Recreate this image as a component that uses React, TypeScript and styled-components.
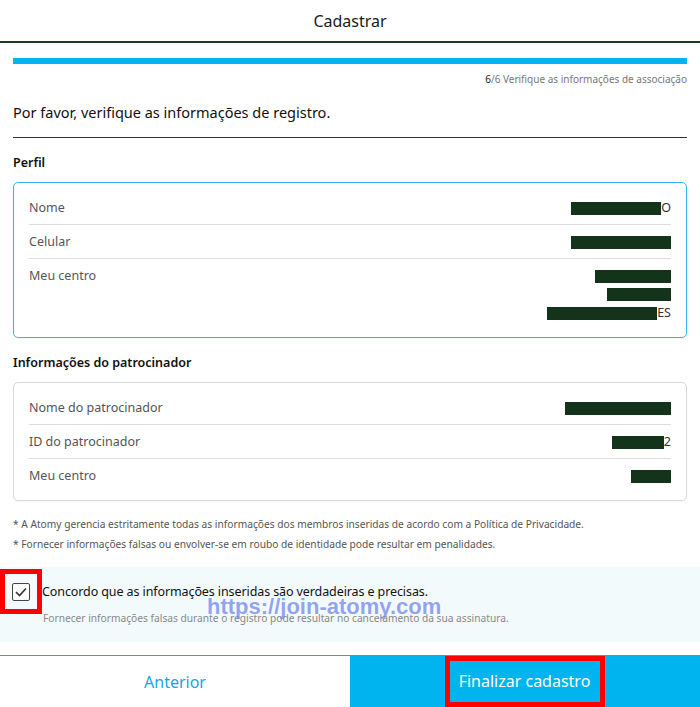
import styled, { createGlobalStyle } from "styled-components";

const GlobalStyle = createGlobalStyle`
  body {
    margin: 0;
    background: #fff;
    font-family: "Noto Sans", "Open Sans", sans-serif;
    color: #222;
  }
`;

type Value = { bar?: number; tail?: string };
type Row = { label: string; values: Value[] };

const profile: Row[] = [
  { label: "Nome", values: [{ bar: 90, tail: "O" }] },
  { label: "Celular", values: [{ bar: 100 }] },
  {
    label: "Meu centro",
    values: [{ bar: 76 }, { bar: 64 }, { bar: 110, tail: "ES" }],
  },
];

const sponsor: Row[] = [
  { label: "Nome do patrocinador", values: [{ bar: 106 }] },
  { label: "ID do patrocinador", values: [{ bar: 52, tail: "2" }] },
  { label: "Meu centro", values: [{ bar: 40 }] },
];

const InfoBox = ({ rows, active }: { rows: Row[]; active?: boolean }) => (
  <Box.Wrapper $active={active}>
    {rows.map((r) => (
      <Box.Row key={r.label}>
        <Box.Label>{r.label}</Box.Label>
        <Box.Values>
          {r.values.map((v, i) => (
            <Box.Value key={i}>
              {v.bar && <Box.Redact style={{ width: v.bar }} />}
              {v.tail}
            </Box.Value>
          ))}
        </Box.Values>
      </Box.Row>
    ))}
  </Box.Wrapper>
);

const App = () => {
  return (
    <Page>
      <GlobalStyle />
      <Header>Cadastrar</Header>
      <Main>
        <Progress />
        <Step>
          <b>6</b>/6 Verifique as informações de associação
        </Step>
        <Title>Por favor, verifique as informações de registro.</Title>
        <SectionTitle>Perfil</SectionTitle>
        <InfoBox rows={profile} active />
        <SectionTitle>Informações do patrocinador</SectionTitle>
        <InfoBox rows={sponsor} />
        <Notes>
          <p>
            * A Atomy gerencia estritamente todas as informações dos membros
            inseridas de acordo com a Política de Privacidade.
          </p>
          <p>
            * Fornecer informações falsas ou envolver-se em roubo de identidade
            pode resultar em penalidades.
          </p>
        </Notes>
      </Main>
      <Agree.Wrapper>
        <Agree.Line>
          <Agree.Mark>
            <Agree.Check>
              <svg width="12" height="10" viewBox="0 0 12 10">
                <path
                  d="M1 5 L4.5 8.5 L11 1.5"
                  fill="none"
                  stroke="#333"
                  strokeWidth="1.6"
                />
              </svg>
            </Agree.Check>
          </Agree.Mark>
          <Agree.Text>
            Concordo que as informações inseridas são verdadeiras e precisas.
          </Agree.Text>
        </Agree.Line>
        <Agree.Sub>
          Fornecer informações falsas durante o registro pode resultar no
          cancelamento da sua assinatura.
        </Agree.Sub>
        <Watermark>https://join-atomy.com</Watermark>
      </Agree.Wrapper>
      <Footer.Wrapper>
        <Footer.Button>Anterior</Footer.Button>
        <Footer.Button $primary>
          <Footer.Marked>Finalizar cadastro</Footer.Marked>
        </Footer.Button>
      </Footer.Wrapper>
    </Page>
  );
};

const Page = styled.div`
  width: 700px;
  height: 707px;
  display: flex;
  flex-direction: column;
  overflow: hidden;
`;

const Header = styled.header`
  height: 41px;
  flex-shrink: 0;
  display: flex;
  align-items: center;
  justify-content: center;
  font-size: 16px;
  color: #1a1a1a;
  border-bottom: 2px solid #203a24;
`;

const Main = styled.main`
  padding: 0 13px;
`;

const Progress = styled.div`
  margin-top: 15px;
  height: 6px;
  background: #00b4ef;
`;

const Step = styled.div`
  margin-top: 8px;
  text-align: right;
  font-size: 10px;
  color: #777;
  b {
    font-weight: 400;
    color: #222;
  }
`;

const Title = styled.h2`
  margin: 16px 0 0;
  padding-bottom: 15px;
  font-size: 14.5px;
  font-weight: 400;
  color: #111;
  border-bottom: 1px solid #333;
`;

const SectionTitle = styled.h3`
  margin: 16px 0 11px;
  font-size: 12.5px;
  font-weight: 600;
  color: #111;
`;

const Box = {
  Wrapper: styled.div<{ $active?: boolean }>`
    border: 1px solid ${(p) => (p.$active ? "#35b6ea" : "#d9d9d9")};
    border-radius: 5px;
    padding: 8px 15px;
    box-shadow: 0 1px 2px rgba(0, 0, 0, 0.04);
  `,
  Row: styled.div`
    display: flex;
    justify-content: space-between;
    padding: 8px 0 7px;
    border-bottom: 1px solid #ddd;
    &:last-child {
      border-bottom: none;
    }
  `,
  Label: styled.span`
    font-size: 12.5px;
    color: #555;
    line-height: 18px;
  `,
  Values: styled.div`
    display: flex;
    flex-direction: column;
    align-items: flex-end;
    gap: 0.5px;
  `,
  Value: styled.span`
    display: flex;
    align-items: center;
    height: 18px;
    font-size: 12.5px;
    color: #333;
    line-height: 18px;
  `,
  Redact: styled.span`
    display: inline-block;
    height: 13px;
    background: #14331b;
  `,
};

const Notes = styled.div`
  margin-top: 13px;
  font-size: 10.2px;
  color: #555;
  p {
    margin: 0;
    line-height: 20px;
  }
`;

const Agree = {
  Wrapper: styled.section`
    position: relative;
    margin-top: 13px;
    padding: 2px 0 17px;
    background: #f3fafc;
  `,
  Line: styled.div`
    display: flex;
    align-items: center;
  `,
  Mark: styled.div`
    width: 32px;
    height: 35px;
    border: 5px solid #ff0000;
    display: flex;
    align-items: center;
    justify-content: center;
  `,
  Check: styled.span`
    width: 16px;
    height: 16px;
    border: 1px solid #444;
    border-radius: 2px;
    background: #fff;
    display: flex;
    align-items: center;
    justify-content: center;
  `,
  Text: styled.span`
    font-size: 12.5px;
    color: #111;
    letter-spacing: -0.1px;
  `,
  Sub: styled.div`
    margin-top: -3px;
    padding-left: 43px;
    font-size: 10.2px;
    color: #888;
  `,
};

const Watermark = styled.span`
  position: absolute;
  left: 207px;
  top: 27px;
  font-family: "Liberation Sans", Arial, sans-serif;
  font-size: 22px;
  font-weight: 700;
  color: rgba(115, 135, 235, 0.75);
  pointer-events: none;
`;

const Footer = {
  Wrapper: styled.footer`
    margin-top: auto;
    height: 52px;
    flex-shrink: 0;
    display: grid;
    grid-template-columns: 1fr 1fr;
  `,
  Button: styled.button<{ $primary?: boolean }>`
    border: none;
    border-top: 1px solid #00b4ef;
    background: ${(p) => (p.$primary ? "#00b4ef" : "#fff")};
    color: ${(p) => (p.$primary ? "#fff" : "#1aa6e0")};
    font-family: "Noto Sans", sans-serif;
    font-size: 16px;
    display: flex;
    align-items: center;
    justify-content: center;
    padding: 0;
  `,
  Marked: styled.span`
    border: 5px solid #ff0000;
    height: 51px;
    box-sizing: border-box;
    padding: 0 10px 0 9px;
    display: flex;
    align-items: center;
    margin-top: -1px;
  `,
};

export default App;
